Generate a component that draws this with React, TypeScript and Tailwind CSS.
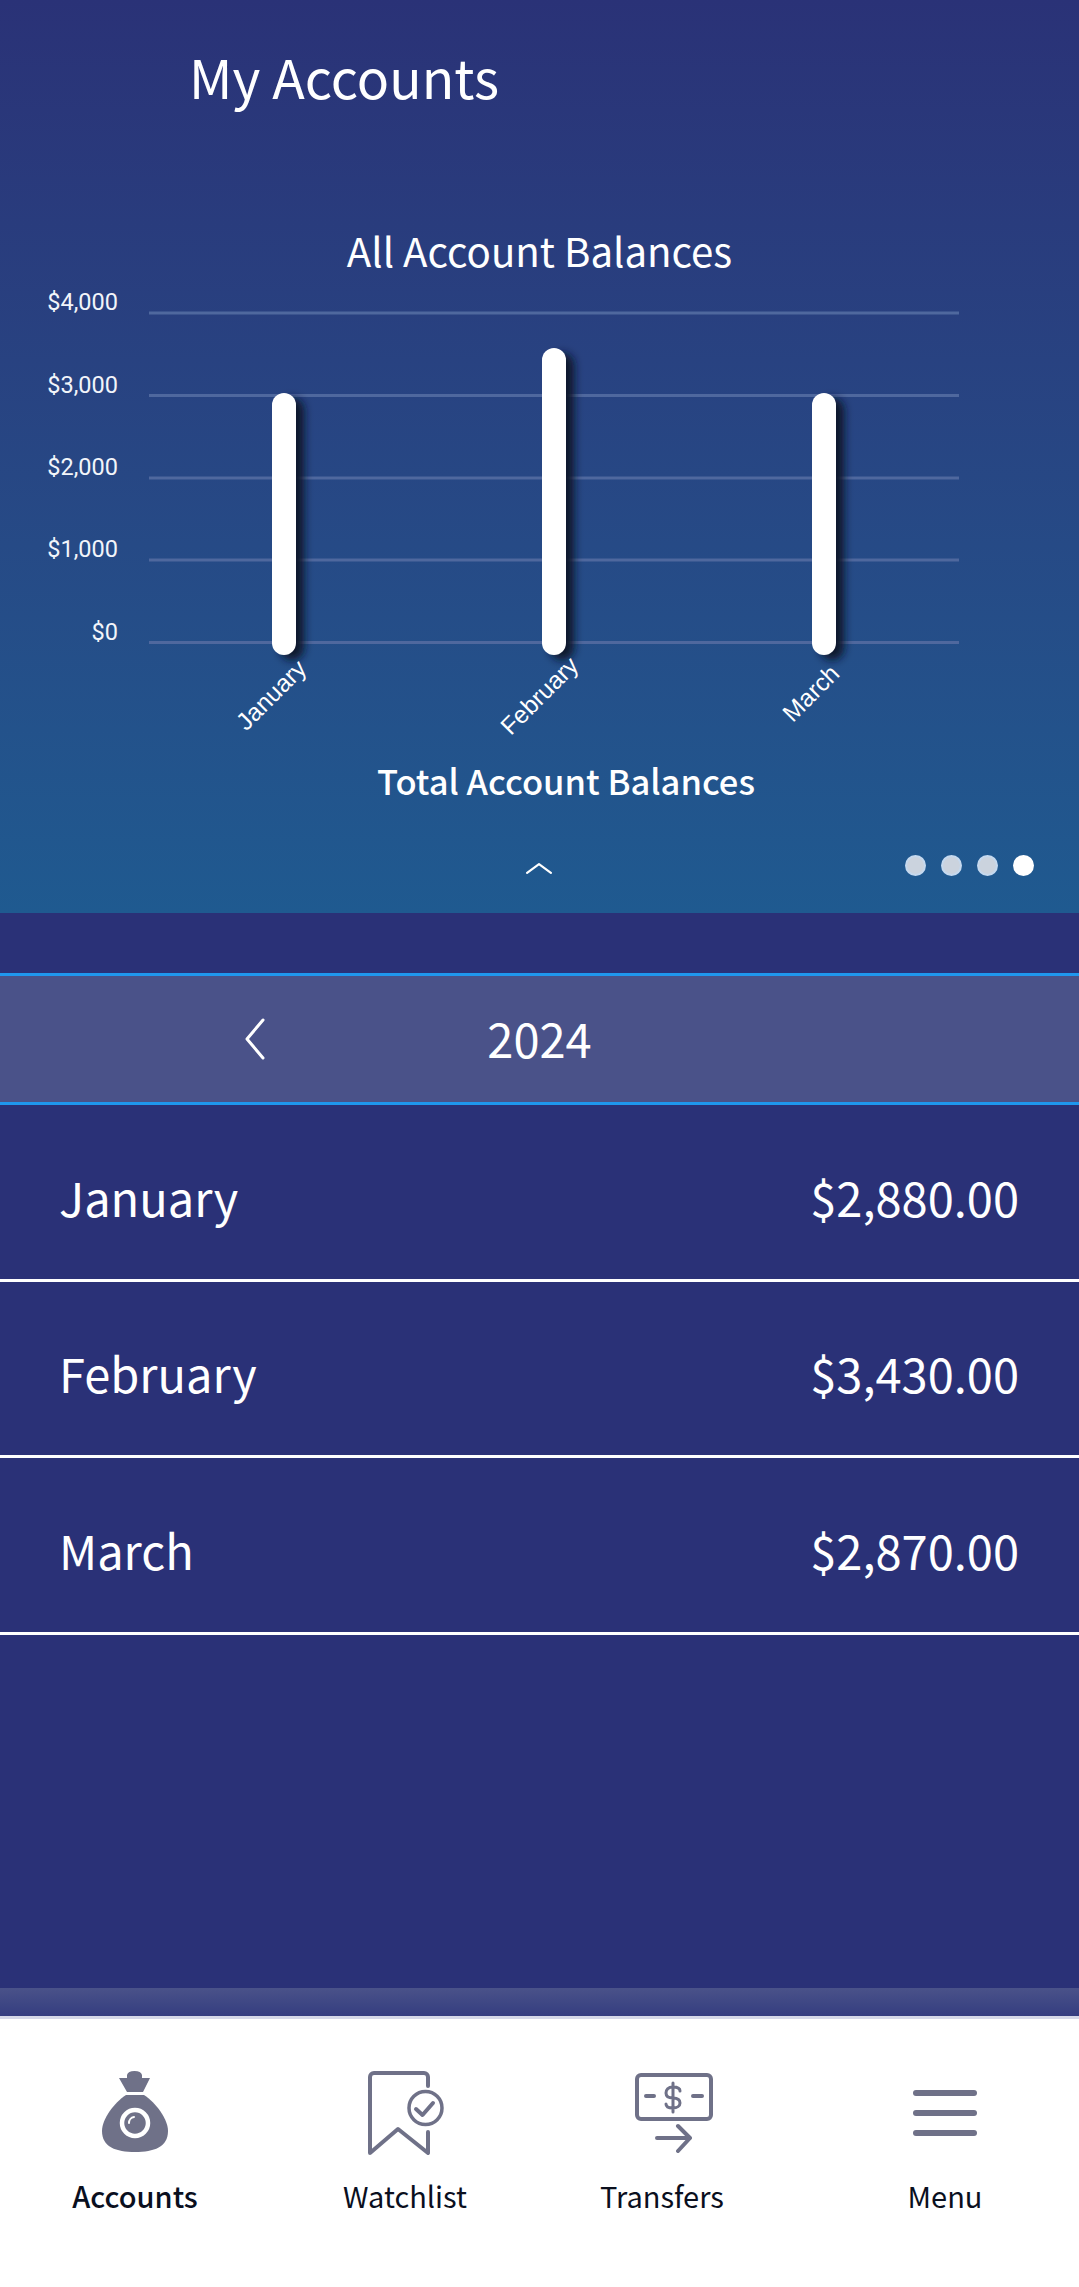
const sans = { fontFamily: '"Noto Sans CJK SC", "Noto Sans", sans-serif' };

const rows = [
  { month: 'January', total: '$2,880.00' },
  { month: 'February', total: '$3,430.00' },
  { month: 'March', total: '$2,870.00' },
];

const ticks = [
  { label: '$4,000', y: 313 },
  { label: '$3,000', y: 395.5 },
  { label: '$2,000', y: 478 },
  { label: '$1,000', y: 560 },
  { label: '$0', y: 642.5 },
];

const bars = [
  { x: 272, top: 393, label: 'January', lx: 308, ly: 670 },
  { x: 542, top: 348, label: 'February', lx: 580, ly: 667 },
  { x: 812, top: 393, label: 'March', lx: 841, ly: 675 },
];

function BalanceChart() {
  return (
    <svg viewBox="0 280 1079 470" className="block w-full h-[470px]">
      <defs>
        <filter id="barShadow" x="-100%" y="-10%" width="300%" height="120%">
          <feGaussianBlur stdDeviation="4" />
        </filter>
      </defs>
      {ticks.map((t) => (
        <g key={t.label}>
          <line x1="149" x2="959" y1={t.y} y2={t.y} stroke="#4f689e" strokeWidth="3" />
          <text x="118" y={t.y - 3} textAnchor="end" fontSize="23.5" fill="#f2f5fa" fontFamily="Roboto, sans-serif">
            {t.label}
          </text>
        </g>
      ))}
      {bars.map((b) => (
        <g key={b.label}>
          <rect x={b.x + 8} y={b.top + 5} width="24" height={655 - b.top} rx="12" fill="#07142b" filter="url(#barShadow)" />
          <rect x={b.x} y={b.top} width="24" height={655 - b.top} rx="12" fill="#ffffff" />
          <text
            x={b.lx}
            y={b.ly}
            textAnchor="end"
            fontSize="24.5"
            fill="#ffffff"
            fontFamily='"Liberation Sans", Arial, sans-serif'
            transform={`rotate(-45 ${b.lx} ${b.ly})`}
          >
            {b.label}
          </text>
        </g>
      ))}
    </svg>
  );
}

function BagIcon() {
  return (
    <svg viewBox="0 0 66 81" className="w-[66px] h-[81px] -mt-[3px]">
      <path d="M25 4Q26 0 32.5 0Q39 0 40 4V7L48 7L41 21H25L17 7L25 7Z" fill="#6f7188" />
      <path d="M24 24H42C54 32 66 48 66 60C66 76 52 81 33 81C14 81 0 76 0 60C0 48 12 32 24 24Z" fill="#6f7188" />
      <circle cx="33" cy="52" r="13" fill="none" stroke="#ffffff" strokeWidth="4.5" />
      <path d="M27 52a6 6 0 0 1 5-6" fill="none" stroke="#ffffff" strokeWidth="2" strokeLinecap="round" />
    </svg>
  );
}

function WatchIcon() {
  return (
    <svg viewBox="0 0 76 84" fill="none" stroke="#6f7188" className="w-[76px] h-[84px] ml-[2px]">
      <path d="M60 15V6a4 4 0 0 0-4-4H6a4 4 0 0 0-4 4V82L30 58L60 82V61" strokeWidth="4" strokeLinejoin="round" strokeLinecap="round" />
      <circle cx="57.5" cy="37" r="16.5" strokeWidth="3.5" />
      <path d="M48 38L54.5 44L65 32" strokeWidth="4" strokeLinecap="round" strokeLinejoin="round" />
    </svg>
  );
}

function TransferIcon() {
  return (
    <svg viewBox="0 0 78 80" fill="none" stroke="#6f7188" strokeWidth="4" strokeLinecap="round" strokeLinejoin="round" className="w-[78px] h-[80px] ml-[24px]">
      <rect x="2" y="2" width="74" height="44" rx="4" />
      <path d="M11 23H19M58 23H67" />
      <path d="M45 18C45 15 42 14 38 14C33 14 31 17 31 20C31 24 35 25 38 25C42 25 45 26 45 30C45 33 42 35 38 35C34 35 31 34 31 31M38 10V39" strokeWidth="3" />
      <path d="M22 65H55M43 53L55 65L43 78" />
    </svg>
  );
}

function MenuIcon() {
  return (
    <div className="flex flex-col gap-[14px] w-[64px]">
      <div className="h-[6px] rounded-full bg-[#6f7188]" />
      <div className="h-[6px] rounded-full bg-[#6f7188]" />
      <div className="h-[6px] rounded-full bg-[#6f7188]" />
    </div>
  );
}

function NavItem({ label, active, className, children }: { label: string; active?: boolean; className: string; children: React.ReactNode }) {
  return (
    <div className={`flex flex-col items-center w-[150px] ${className}`}>
      <div className="flex items-center justify-center h-[90px]">{children}</div>
      <span className={`text-[29px] leading-[44px] mt-[15px] text-[#0a0f1e] ${active ? 'font-medium' : ''}`}>{label}</span>
    </div>
  );
}

export default function App() {
  return (
    <div className="flex flex-col h-[2287px] w-full overflow-hidden bg-[#2a3177] text-white" style={sans}>
      {/* Chart panel */}
      <div className="h-[913px] shrink-0 bg-gradient-to-b from-[#2a3277] to-[#1f5a90]">
        <h1 className="pl-[189px] pt-[40px] text-[53.5px] leading-[72px] font-normal">My Accounts</h1>
        <h2 className="mt-[110px] text-center text-[40.2px] leading-[56px] font-normal">All Account Balances</h2>
        <div className="mt-[2px]">
          <BalanceChart />
        </div>
        <div className="pl-[53px] mt-[5px] text-center text-[34.5px] leading-[50px] font-medium">Total Account Balances</div>
        <div className="grid grid-cols-3 items-center mt-[50px]">
          <div />
          <div className="flex justify-center">
            <svg viewBox="0 0 24 11" fill="none" stroke="#ffffff" strokeWidth="2" strokeLinecap="round" strokeLinejoin="round" className="w-[26px] h-[12px] mt-[4px]">
              <path d="M1 10L12 2L23 10" />
            </svg>
          </div>
          <div className="flex justify-end gap-[15px] pr-[45px]">
            <div className="w-[21px] h-[21px] rounded-full bg-[#cbd3de] border-2 border-[#c5d9ef]" />
            <div className="w-[21px] h-[21px] rounded-full bg-[#cbd3de] border-2 border-[#c5d9ef]" />
            <div className="w-[21px] h-[21px] rounded-full bg-[#cbd3de] border-2 border-[#c5d9ef]" />
            <div className="w-[21px] h-[21px] rounded-full bg-white" />
          </div>
        </div>
      </div>

      {/* Year bar */}
      <div className="relative flex items-center justify-center mt-[60px] h-[132px] shrink-0 bg-[#4a5289] border-y-[3px] border-[#1f97ee]">
        <svg viewBox="0 0 20 42" fill="none" stroke="#ffffff" strokeWidth="3" strokeLinecap="round" strokeLinejoin="round" className="absolute left-[245px] top-[42px] w-[20px] h-[42px]">
          <path d="M18 2L2 21L18 40" />
        </svg>
        <span className="text-[47px] leading-[60px] -mt-[2px]">2024</span>
      </div>

      {/* Monthly totals */}
      {rows.map((row) => (
        <div key={row.month} className="flex items-center justify-between h-[176.5px] shrink-0 pl-[59px] pr-[60px] pt-[10px] border-b-[3px] border-white text-[47px]">
          <span>{row.month}</span>
          <span>{row.total}</span>
        </div>
      ))}

      {/* Bottom nav */}
      <div className="mt-auto h-[28px] shrink-0 bg-gradient-to-b from-[#4a5289] to-[#353d80]" />
      <div className="flex h-[271px] shrink-0 pl-[60px] pt-[49px] bg-white border-t-[3px] border-[#d5d8e8]">
        <NavItem label="Accounts" active className="">
          <BagIcon />
        </NavItem>
        <NavItem label="Watchlist" className="ml-[120px]">
          <WatchIcon />
        </NavItem>
        <NavItem label="Transfers" className="ml-[107px]">
          <TransferIcon />
        </NavItem>
        <NavItem label="Menu" className="ml-[133px]">
          <MenuIcon />
        </NavItem>
      </div>
    </div>
  );
}
